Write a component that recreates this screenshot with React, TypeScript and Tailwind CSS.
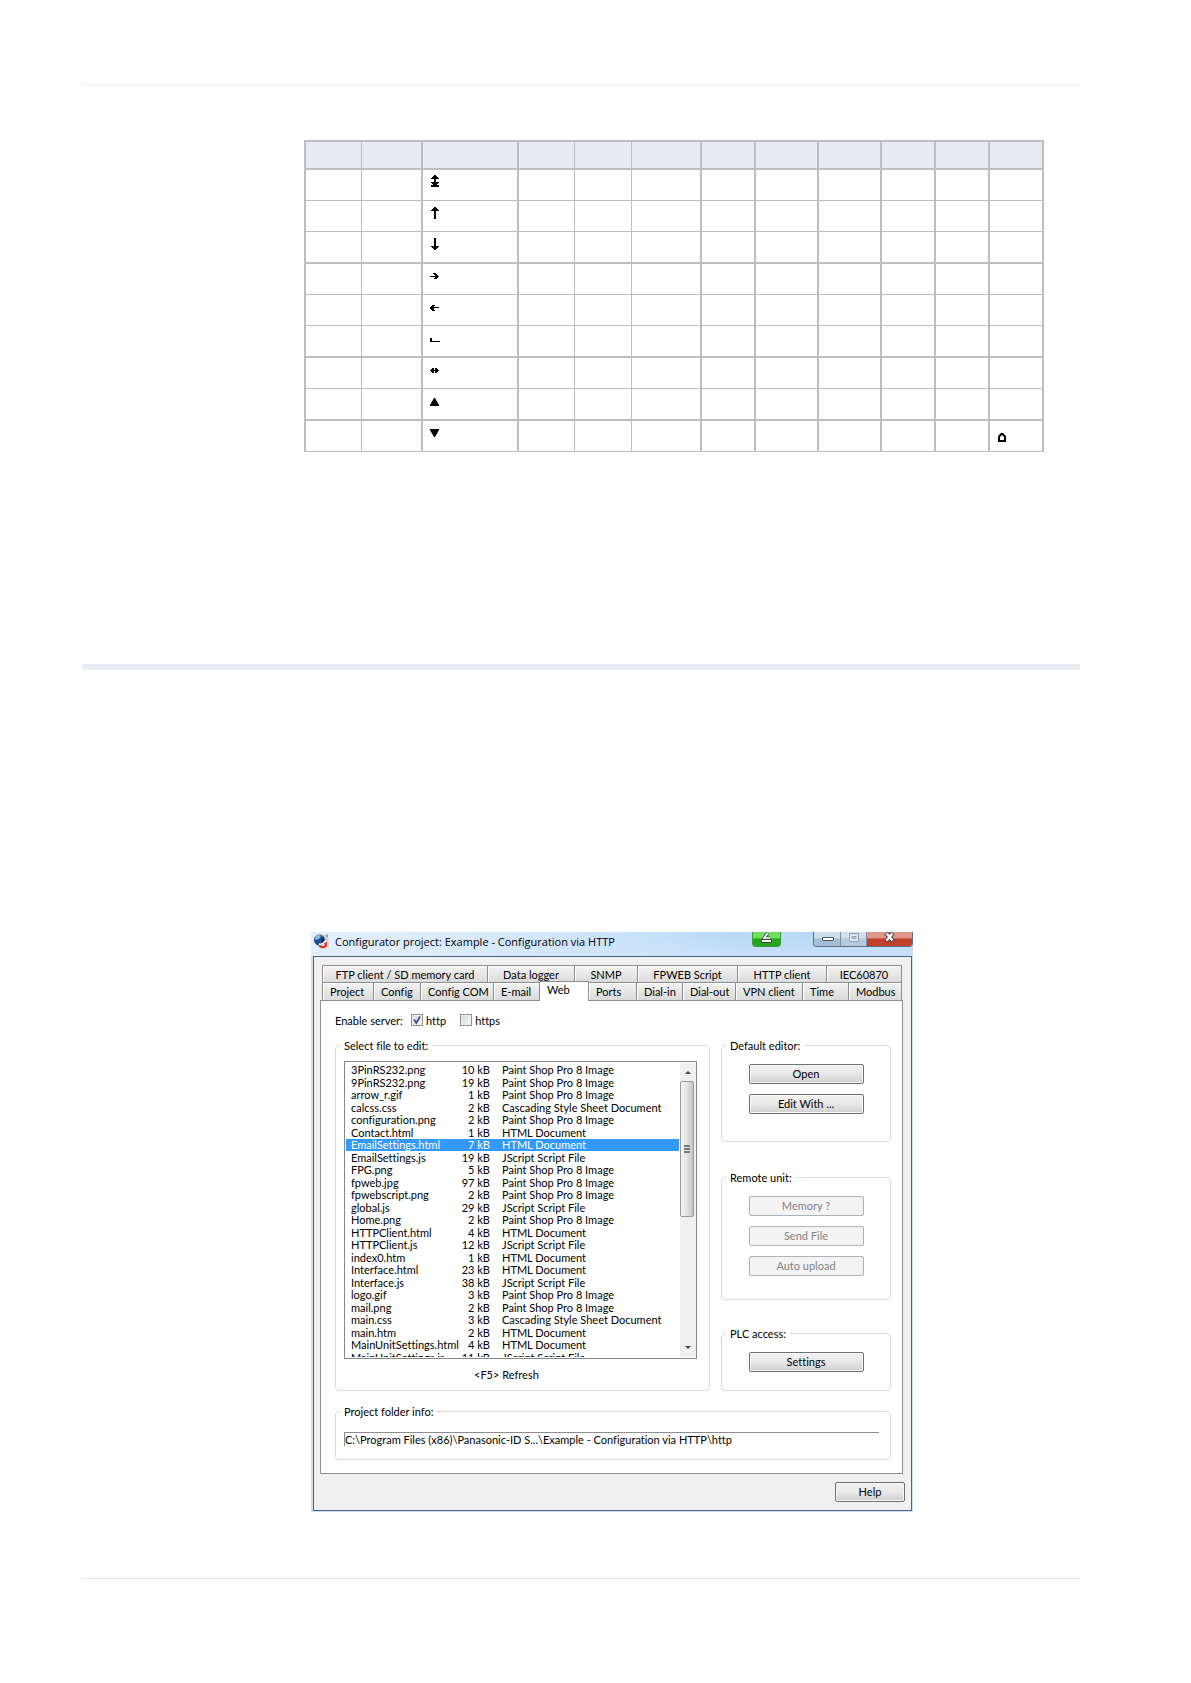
import type { ReactNode } from 'react'

interface FileEntry {
  name: string
  size: number
  type: string
}

const PSP = 'Paint Shop Pro 8 Image'
const CSS = 'Cascading Style Sheet Document'
const HTML = 'HTML Document'
const JS = 'JScript Script File'

const files: FileEntry[] = [
  { name: '3PinRS232.png', size: 10, type: PSP },
  { name: '9PinRS232.png', size: 19, type: PSP },
  { name: 'arrow_r.gif', size: 1, type: PSP },
  { name: 'calcss.css', size: 2, type: CSS },
  { name: 'configuration.png', size: 2, type: PSP },
  { name: 'Contact.html', size: 1, type: HTML },
  { name: 'EmailSettings.html', size: 7, type: HTML },
  { name: 'EmailSettings.js', size: 19, type: JS },
  { name: 'FPG.png', size: 5, type: PSP },
  { name: 'fpweb.jpg', size: 97, type: PSP },
  { name: 'fpwebscript.png', size: 2, type: PSP },
  { name: 'global.js', size: 29, type: JS },
  { name: 'Home.png', size: 2, type: PSP },
  { name: 'HTTPClient.html', size: 4, type: HTML },
  { name: 'HTTPClient.js', size: 12, type: JS },
  { name: 'index0.htm', size: 1, type: HTML },
  { name: 'Interface.html', size: 23, type: HTML },
  { name: 'Interface.js', size: 38, type: JS },
  { name: 'logo.gif', size: 3, type: PSP },
  { name: 'mail.png', size: 2, type: PSP },
  { name: 'main.css', size: 3, type: CSS },
  { name: 'main.htm', size: 2, type: HTML },
  { name: 'MainUnitSettings.html', size: 4, type: HTML },
  { name: 'MainUnitSettings.js', size: 11, type: JS },
]

const topTabs = [
  { label: 'FTP client / SD memory card', width: 'w-[165px]' },
  { label: 'Data logger', width: 'w-[87px]' },
  { label: 'SNMP', width: 'w-[63px]' },
  { label: 'FPWEB Script', width: 'w-[100px]' },
  { label: 'HTTP client', width: 'w-[89px]' },
  { label: 'IEC60870', width: 'w-[75px]' },
]

const bottomTabs = [
  { label: 'Project', width: 'w-[51px]' },
  { label: 'Config', width: 'w-[47px]' },
  { label: 'Config COM', width: 'w-[73px]' },
  { label: 'E-mail', width: 'w-[46px]' },
  { label: 'Web', width: 'w-[49px]' },
  { label: 'Ports', width: 'w-[48px]' },
  { label: 'Dial-in', width: 'w-[46px]' },
  { label: 'Dial-out', width: 'w-[53px]' },
  { label: 'VPN client', width: 'w-[67px]' },
  { label: 'Time', width: 'w-[46px]' },
  { label: 'Modbus', width: 'w-[53px]' },
]

const columns = [
  { width: 'w-[56px]', border: 'border-r' },
  { width: 'w-[61px]', border: 'border-r-2' },
  { width: 'w-[96px]', border: 'border-r-2' },
  { width: 'w-[56px]', border: 'border-r' },
  { width: 'w-[57px]', border: 'border-r' },
  { width: 'w-[70px]', border: 'border-r-2' },
  { width: 'w-[54px]', border: 'border-r-2' },
  { width: 'w-[63px]', border: 'border-r-2' },
  { width: 'w-[63px]', border: 'border-r-2' },
  { width: 'w-[54px]', border: 'border-r-2' },
  { width: 'w-[54px]', border: 'border-r-2' },
  { width: 'w-[54px]', border: 'border-r-2' },
]

const thin = 'h-[31px] border-b'
const thick = 'h-[32px] border-b-2'

// One entry per character row: cell styling and the glyph in the third column
const charRows = [
  { cell: thin, path: 'M4 1h2v1h1v1h1v1h1v1H6v3h3v1H8v1H7v1h2v2H1v-2h2v-1H2V9H1V8h3V5H1V4h1V3h1V2h1z' },
  { cell: thin, path: 'M4 2h2v1h1v1h1v1h1v1H6v8H4V6H1V5h1V4h1V3h1z' },
  { cell: thick, path: 'M4 2h2v8h3v1H8v1H7v1H6v1H4v-1H3v-1H2v-1H1v-1h3z' },
  { cell: thin, path: 'M0 8h5V7H4V6H3V5h3v1h1v1h1v1h1v1H8v1H7v1H4v-1h1V9H0z' },
  { cell: thin, path: 'M9 8H4V7h1V6H2v1H1v1H0v2h1v1h1v1h3v-1H4v-1h0V9h5z' },
  { cell: thick, path: 'M0 8h2v3h8v1H0z' },
  { cell: thin, path: 'M0 8h1V7h1V6h2v2h1V6h2v1h1v1h1v1H8v1H7v1H5V9H4v2H2v-1H1V9H0z' },
  { cell: thick, path: 'M4 5h1l4 7v1H0v-1z' },
  { cell: thin, path: 'M0 4h9v1L5 12H4L0 5z' },
]

function Glyph({ d }: { d: string }) {
  return (
    <svg width="10" height="18" viewBox="0 0 10 18" className="mt-1 ml-[7px] block" fill="#000">
      <path d={d} fillRule="evenodd" />
    </svg>
  )
}

function CharacterTable() {
  return (
    <table className="w-full table-fixed border-separate border-spacing-0 border-t-2 border-l-2 border-[#bdbebe]">
      <colgroup>
        {columns.map((c, i) => (
          <col key={i} className={c.width} />
        ))}
      </colgroup>
      <thead>
        <tr>
          {columns.map((c, i) => (
            <th key={i} className={`h-7 border-b-2 border-[#bdbebe] bg-[#e8ebf2] p-0 ${c.border}`} />
          ))}
        </tr>
      </thead>
      <tbody>
        {charRows.map((row, r) => (
          <tr key={r}>
            {columns.map((c, i) => (
              <td key={i} className={`border-[#bdbebe] p-0 align-top ${row.cell} ${c.border}`}>
                {i === 2 && <Glyph d={row.path} />}
                {i === 11 && r === 8 && <Glyph d="M5 8h1l3 3v6H1v-6l3-3zM5 10l-2 2v3h4v-3z" />}
              </td>
            ))}
          </tr>
        ))}
      </tbody>
    </table>
  )
}

function Tab({ label, width, align = 'text-center' }: { label: string; width: string; align?: string }) {
  const active = label === 'Web'
  return (
    <button
      type="button"
      role="tab"
      aria-selected={active}
      className={`shrink-0 whitespace-nowrap border-t border-r border-[#8c8e94] ${align} ${width} ${
        active
          ? 'relative -mt-px h-[20px] bg-white pb-1'
          : 'h-[18px] bg-linear-to-b from-[#f3f3f3] to-[#dadada] shadow-[inset_1px_1px_0_#fff]'
      }`}
    >
      {label}
    </button>
  )
}

function GroupBox({ title, className, children }: { title: string; className: string; children: ReactNode }) {
  return (
    <fieldset className={`min-w-0 rounded-sm border border-[#d5dbe0] px-2 ${className}`}>
      <legend className="-ml-1 h-[15px] px-1 leading-[15px]">{title}</legend>
      {children}
    </fieldset>
  )
}

function PushButton({ children, disabled = false, width = 'w-[115px]' }: { children: ReactNode; disabled?: boolean; width?: string }) {
  return (
    <button
      type="button"
      disabled={disabled}
      className={`block h-5 rounded-xs border leading-[18px] ${width} ${
        disabled
          ? 'border-[#adb2b5] bg-[#f4f4f4] text-[#838383]'
          : 'border-[#707070] bg-linear-to-b from-[#f2f2f2] via-[#e8e8e8] to-[#cfcfcf] shadow-[inset_0_0_0_1px_#f8f8f8]'
      }`}
    >
      {children}
    </button>
  )
}

function CheckBox({ label, checked = false }: { label: string; checked?: boolean }) {
  return (
    <label className="flex items-center gap-[3px]">
      <span className="relative block size-3">
        <input
          type="checkbox"
          defaultChecked={checked}
          className="peer block size-3 appearance-none border border-[#8e8f8f] bg-linear-to-br from-[#d5d8dc] to-[#fafafa] shadow-[inset_0_0_0_1px_#f4f4f4]"
        />
        <svg viewBox="0 0 12 12" className="pointer-events-none absolute inset-0 hidden size-3 peer-checked:block">
          <path d="M3 5.5l2.3 3.5L9 2.5" fill="none" stroke="#41538f" strokeWidth="1.8" />
        </svg>
      </span>
      {label}
    </label>
  )
}

function TitleBar() {
  return (
    <div className="flex h-6 items-start bg-linear-to-b from-[#b7d8f7] to-[#c6e0f8]">
      <div className="flex h-6 flex-1 items-start bg-linear-to-r from-[#e3f0fc] via-[#d3e8fb] to-transparent pl-[2px]">
        <svg width="17" height="17" viewBox="0 0 17 17" className="mt-px shrink-0">
          <path d="M11 1h4l1 13-4 2z" fill="#d2d6d2" />
          <path d="M13 2h2v2h-2z" fill="#8ba58b" />
          <circle cx="6.500" cy="7" r="5.500" fill="#1f4f8c" />
          <path d="M3 3q3-2 5 0l-2 3-3 1-1-2z" fill="#8fbbe0" />
          <path d="M8 6l3-1v3l-2 2z" fill="#12294f" />
          <path d="M6 11q4 1 6-3" fill="none" stroke="#fff" strokeWidth="1.500" />
          <path d="M6 12q4 2 6 0l-1-2 3-1v4q-3 4-8 1z" fill="#e0302a" />
        </svg>
        <h1 className="ml-[5px] whitespace-nowrap font-['Open_Sans',sans-serif] text-[11px] leading-5">
          Configurator project: Example - Configuration via HTTP
        </h1>
      </div>
      <button
        type="button"
        aria-label="Remote support"
        className="mr-8 h-[15px] w-[29px] rounded-b-sm border border-t-0 border-[#3e9a38] bg-linear-to-b from-[#6fdc62] from-40% to-[#27a51f] to-50%"
      >
        <svg width="27" height="14" viewBox="0 0 27 14" className="block">
          <path d="M15 1l-4 5h6" fill="none" stroke="#444" strokeWidth="3" />
          <path d="M15 1l-4 5h6" fill="none" stroke="#fff" strokeWidth="1.500" />
          <path d="M8.500 7.500h10v3h-10z" fill="#fff" stroke="#444" />
        </svg>
      </button>
      <div className="flex h-[15px] overflow-hidden rounded-b-sm border border-t-0 border-[#5d6f82]">
        <button type="button" aria-label="Minimize" className="w-[27px] border-r border-[#7d8fa3] bg-linear-to-b from-[#cfdfee] from-40% to-[#a5bdd4] to-50%">
          <svg width="26" height="14" viewBox="0 0 26 14" className="block">
            <path d="M8.500 5.500h11v3h-11z" fill="#fff" stroke="#50586a" />
          </svg>
        </button>
        <button type="button" aria-label="Maximize" className="w-[26px] border-r border-[#7d8fa3] bg-linear-to-b from-[#cfdfee] from-40% to-[#b3cadf] to-50%">
          <svg width="25" height="14" viewBox="0 0 25 14" className="block">
            <path d="M8.500 1.500h9v8h-9z" fill="#dfe9f2" stroke="#8fa0b4" />
            <path d="M11 4.500h4v2h-4z" fill="#c0d2e4" stroke="#8fa0b4" />
          </svg>
        </button>
        <button type="button" aria-label="Close" className="w-[45px] bg-linear-to-b from-[#e0968a] from-40% to-[#c1402c] to-50%">
          <svg width="45" height="14" viewBox="0 0 45 14" className="block">
            <path d="M19 1l7 8M26 1l-7 8" stroke="#50404a" strokeWidth="4.500" />
            <path d="M19.500 1.500l6 7M25.500 1.500l-6 7" stroke="#fff" strokeWidth="2.500" />
          </svg>
        </button>
      </div>
    </div>
  )
}

function ScrollBar() {
  return (
    <div className="flex w-4 shrink-0 flex-col bg-[#f0f0f0] pr-0.5">
      <button type="button" aria-label="Scroll up" className="h-[18px]">
        <svg width="14" height="18" viewBox="0 0 14 18" className="block">
          <path d="M5 11l3-3 3 3z" fill="#444" />
        </svg>
      </button>
      <div className="flex h-[136px] items-center justify-center rounded-xs border border-[#97999c] bg-linear-to-r from-[#f5f5f5] via-[#e2e3e4] to-[#c2c4c6]">
        <svg width="7" height="8" viewBox="0 0 7 8">
          <path d="M0 1h6M0 4h6M0 7h6" stroke="#555" strokeWidth="1.500" />
        </svg>
      </div>
      <button type="button" aria-label="Scroll down" className="mt-auto h-[18px]">
        <svg width="14" height="18" viewBox="0 0 14 18" className="block">
          <path d="M5 7l3 3 3-3z" fill="#444" />
        </svg>
      </button>
    </div>
  )
}

function FileList() {
  return (
    <div className="mt-2 mr-1 flex h-[298px] border border-[#828790] bg-white p-px pr-0">
      <div className="mr-px flex-1 overflow-hidden pt-px">
        <table className="w-full table-fixed border-collapse">
          <colgroup>
            <col className="w-[97px]" />
            <col className="w-[47px]" />
            <col />
          </colgroup>
          <tbody>
            {files.map((file) => (
              <tr
                key={file.name}
                className={`h-3 even:h-[13px] ${file.name === 'EmailSettings.html' ? 'bg-[#3399ff] text-white' : ''}`}
              >
                <td className="whitespace-nowrap p-0 pl-[5px] leading-3">{file.name}</td>
                <td className="whitespace-nowrap p-0 text-right leading-3">{file.size} kB</td>
                <td className="whitespace-nowrap p-0 pl-3 leading-3">{file.type}</td>
              </tr>
            ))}
          </tbody>
        </table>
      </div>
      <ScrollBar />
    </div>
  )
}

function ConfiguratorWindow() {
  return (
    <section className="w-[602px] bg-[#c9e0f5] font-[Lato,'Liberation_Sans',sans-serif] text-[11px] leading-[15px] text-black [font-variant-ligatures:none]">
      <TitleBar />
      <div className="mr-px ml-0.5 border border-[#4d6380] bg-[#f0f0f0] px-1.5 pt-2">
        <div role="tablist" className="ml-0.5 w-[580px] border-l border-[#8c8e94]">
          <div className="flex h-[17px]">
            {topTabs.map((tab) => (
              <Tab key={tab.label} {...tab} />
            ))}
          </div>
          <div className="flex h-[18px]">
            {bottomTabs.map((tab) => (
              <Tab key={tab.label} {...tab} align="pl-[7px] text-left" />
            ))}
          </div>
        </div>

        <div className="w-[583px] border border-[#8c8e94] bg-white pt-3 pr-[11px] pb-[13px] pl-[14px]">
          <div className="flex h-[14px] items-center">
            <span className="w-[76px]">Enable server:</span>
            <div className="flex gap-[14px]">
              <CheckBox label="http" checked />
              <CheckBox label="https" />
            </div>
          </div>

          <div className="mt-[11px] flex justify-between">
            <GroupBox title="Select file to edit:" className="h-[353px] w-[375px]">
              <FileList />
              <p className="mt-2 ml-[130px]">&lt;F5&gt; Refresh</p>
            </GroupBox>
            <div className="w-[170px]">
              <GroupBox title="Default editor:" className="h-[104px]">
                <div className="mt-[11px] flex flex-col items-center gap-[10px]">
                  <PushButton>Open</PushButton>
                  <PushButton>Edit With ...</PushButton>
                </div>
              </GroupBox>
              <GroupBox title="Remote unit:" className="mt-7 h-[130px]">
                <div className="mt-[11px] flex flex-col items-center gap-[10px]">
                  <PushButton disabled>Memory ?</PushButton>
                  <PushButton disabled>Send File</PushButton>
                  <PushButton disabled>Auto upload</PushButton>
                </div>
              </GroupBox>
              <GroupBox title="PLC access:" className="mt-[26px] h-[65px]">
                <div className="mt-[11px] flex flex-col items-center">
                  <PushButton>Settings</PushButton>
                </div>
              </GroupBox>
            </div>
          </div>

          <GroupBox title="Project folder info:" className="mt-[13px] h-[56px]">
            <input
              type="text"
              readOnly
              aria-label="Project folder info"
              defaultValue="C:\Program Files (x86)\Panasonic-ID S...\Example - Configuration via HTTP\http"
              className="mt-[13px] block h-[14px] w-[535px] border-t border-l border-[#8c8e94] bg-white leading-[13px] outline-none"
            />
          </GroupBox>
        </div>

        <div className="flex justify-end py-2">
          <PushButton width="w-[70px]">Help</PushButton>
        </div>
      </div>
      <div className="h-px" />
    </section>
  )
}

export default function App() {
  return (
    <main className="min-h-screen bg-white pt-[84px] pr-[111px] pb-26 pl-[82px]">
      <hr className="border-t border-[#ebebeb]" />
      <div className="mt-[55px] mr-9 ml-[222px]">
        <CharacterTable />
      </div>
      <hr className="mt-[212px] border-t-[6px] border-[#e9edf3]" />
      <div className="mt-[262px] ml-[229px]">
        <ConfiguratorWindow />
      </div>
      <hr className="mt-[66px] border-t border-[#e4e5e6]" />
    </main>
  )
}
